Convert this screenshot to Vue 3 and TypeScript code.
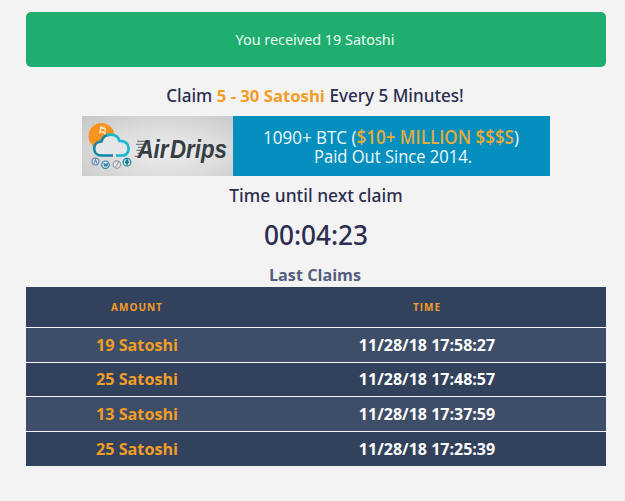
<template>
  <div class="faucet">
    <div class="alert">You received 19 Satoshi</div>

    <h4 class="claim">Claim <b>5 - 30 Satoshi</b> Every 5 Minutes!</h4>

    <div class="banner">
      <svg class="logo" viewBox="0 0 151 60" width="151" height="60">
        <!-- coin behind the cloud -->
        <circle cx="19.5" cy="20" r="13" fill="#f7931e" />
        <g fill="none" stroke="#fbe3c4" stroke-width="1.4" transform="rotate(12 20 16)">
          <path d="M17 12h4q2 0 2 2t-2 2h-3M18 12v6M21 16q2.500 0 2.500 2" />
          <path d="M18.500 10v2M21 10v2" stroke-width="1" />
        </g>
        <path d="M19 39.500C10 39.500 10 26 19 26C20 16 35 15 37.500 23.500C48 23 49 39 40 39.500z" fill="#e4e6e7" />
        <path d="M31 39.500H19.500C10 39.500 9.500 26 19.500 25.500C20.500 21 24 18.700 28.500 18.700" fill="none" stroke="#0b86a6" stroke-width="2.600" />
        <path d="M25 19.500C30 17.500 36 19 37.500 25C49 24 49.500 39.500 40 39.500H34" fill="none" stroke="#16b9cc" stroke-width="2.600" />
        <!-- coin drips -->
        <g fill="#e8eaec" stroke-width="1.200">
          <circle cx="13.500" cy="45.500" r="3.400" stroke="#6a8db8" />
          <path d="M12 47.500l1.500-4 1.500 4" fill="none" stroke="#6a8db8" />
          <circle cx="23.500" cy="48.700" r="3.700" stroke="#2787ad" />
          <path d="M21.500 46.500l2 1.500 2.500-1.500-.5 4h-3.500z" fill="#2787ad" stroke="none" />
          <circle cx="34.800" cy="48.500" r="3.700" stroke="#9399a3" />
          <path d="M33.500 51l3-5" stroke="#9399a3" />
          <circle cx="45" cy="46.200" r="3.800" stroke="#127f99" />
          <path d="M45 42.500l2.300 3.500-2.300 3.500-2.300-3.500z" fill="#127f99" stroke="none" />
        </g>
        <g stroke="#353d43" stroke-width=".8">
          <path d="M55 25.300h10M54 28.300h9.500M56 31.300h6M54.500 34.300h6M55.500 37.300h4M52.500 40.300h5" />
        </g>
        <text class="brand" x="55.500" y="42" textLength="31" lengthAdjust="spacingAndGlyphs">Air</text>
        <text class="brand" x="88" y="42" textLength="57" lengthAdjust="spacingAndGlyphs">Drips</text>
      </svg>
      <svg class="promo" viewBox="0 0 317 60" width="317" height="60">
        <text x="30" y="27.500" textLength="256" lengthAdjust="spacingAndGlyphs">1090+ BTC (<tspan class="gold">$10+ MILLION $$$S</tspan>)</text>
        <text x="81" y="47" textLength="158" lengthAdjust="spacingAndGlyphs">Paid Out Since 2014.</text>
      </svg>
    </div>

    <h4 class="until">Time until next claim</h4>
    <div class="timer">{{ timer }}</div>

    <h4 class="last">Last Claims</h4>
    <table>
      <thead>
        <tr>
          <th class="amount">Amount</th>
          <th>Time</th>
        </tr>
      </thead>
      <tbody>
        <tr v-for="claim in claims" :key="claim.time">
          <td class="amount">{{ claim.amount }} Satoshi</td>
          <td>{{ claim.time }}</td>
        </tr>
      </tbody>
    </table>
  </div>
</template>

<script setup lang="ts">
import { computed, ref } from 'vue'

interface Claim {
  amount: number
  time: string
}

// seconds left until the next claim
const remaining = ref(263)

const timer = computed(() => {
  const s = remaining.value
  return [Math.floor(s / 3600), Math.floor(s / 60) % 60, s % 60]
    .map((n) => String(n).padStart(2, '0'))
    .join(':')
})

const claims: Claim[] = [
  { amount: 19, time: '11/28/18 17:58:27' },
  { amount: 25, time: '11/28/18 17:48:57' },
  { amount: 13, time: '11/28/18 17:37:59' },
  { amount: 25, time: '11/28/18 17:25:39' },
]
</script>

<style>
body {
  background: #f3f3f3;
}
</style>

<style scoped>
.faucet {
  box-sizing: border-box;
  height: 501px;
  padding: 12px 19px 0 26px;
  font-family: 'Noto Sans', 'Open Sans', sans-serif;
  color: #2c2d50;
  text-align: center;
}
.alert {
  height: 55px;
  line-height: 56px;
  border-radius: 5px;
  background: #20ae70;
  color: #e9fff3;
  font-size: 14.4px;
  padding-right: 2px;
}
h4 {
  margin: 0;
  font-size: 17.1px;
  font-weight: 500;
  line-height: 24px;
}
.claim {
  margin-top: 17px;
  padding-right: 2px;
}
.claim b {
  color: #f29d26;
  font-weight: 700;
  font-family: 'Open Sans', sans-serif;
  font-size: 16.7px;
}
.banner {
  display: flex;
  width: 468px;
  height: 60px;
  margin: 8px auto 0 56px;
  background: #058fbe;
}
.logo {
  background: radial-gradient(ellipse at 55% 60%, #ececec, #dcdcdc 50%, #c6c6c6);
}
.brand {
  font-family: 'Liberation Sans', sans-serif;
  font-size: 25px;
  font-style: italic;
  font-weight: 700;
  fill: #353d43;
}
.promo text {
  font-family: 'Open Sans', sans-serif;
  font-size: 19px;
  fill: #effaff;
}
.promo .gold {
  fill: #e5ab3b;
  font-weight: 600;
}
.until {
  margin-top: 7px;
  font-size: 17.4px;
}
.timer {
  margin-top: 10px;
  font-size: 26.2px;
  font-weight: 500;
  line-height: 36px;
}
.last {
  margin-top: 10px;
  padding-right: 2px;
  color: #536080;
  font-family: 'Open Sans', sans-serif;
  font-size: 16.2px;
  font-weight: 700;
}
table {
  width: 580px;
  border-spacing: 0;
  table-layout: fixed;
  color: #fff;
  font-family: 'Open Sans', sans-serif;
  font-size: 16px;
  font-weight: 700;
}
thead tr {
  height: 40px;
}
th {
  padding: 0;
  background: #32425d;
  color: #f29d26;
  font-size: 10px;
  letter-spacing: 1px;
  text-transform: uppercase;
}
th.amount {
  width: 222px;
}
td {
  height: 33.6px;
  padding: 0;
  border-top: 1px solid #f3f5fa;
  background: #32425d;
  line-height: 22px;
}
tbody tr:last-child td {
  height: 34.2px;
}
tbody tr:nth-child(odd) td {
  background: #3e4e68;
}
td.amount {
  color: #f29d26;
  font-size: 16.2px;
}
</style>
